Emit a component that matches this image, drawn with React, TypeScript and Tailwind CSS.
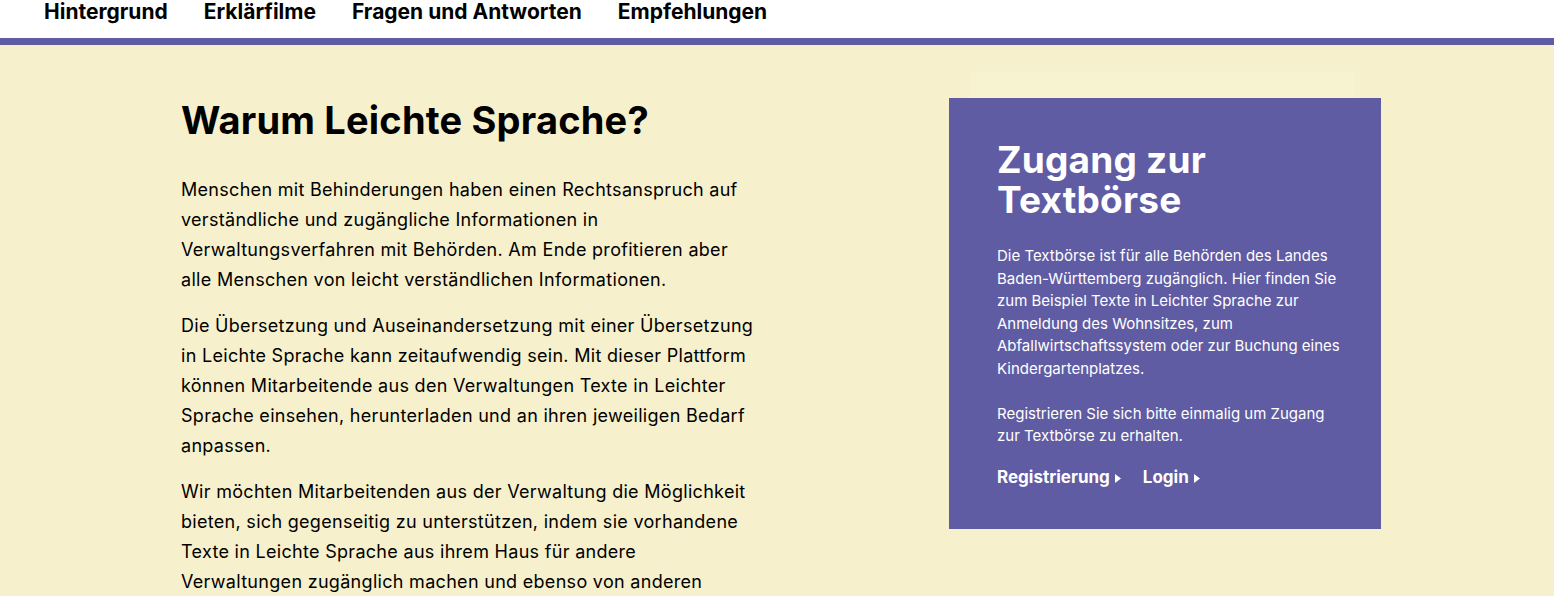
import React from 'react';

const Caret = () => (
  <svg width="6" height="9" viewBox="0 0 6 9" className="ml-[5px] mt-[2px]" aria-hidden>
    <path d="M0 0 L6 4.5 L0 9 Z" fill="white" />
  </svg>
);

export default function App() {
  return (
    <div className="min-h-screen bg-[#f6f0cc] font-['Inter',sans-serif] text-black overflow-hidden">
      <header className="bg-white h-[38px] border-b-[7px] border-[#605ca3] box-content">
        <nav className="flex gap-[36px] pl-[44px] text-[21px] leading-[24px] font-bold">
          <a>Hintergrund</a>
          <a>Erklärfilme</a>
          <a>Fragen und Antworten</a>
          <a>Empfehlungen</a>
        </nav>
      </header>

      <main className="flex pl-[181px] pt-[53px]">
        <section className="w-[580px]">
          <h1 className="text-[38px] leading-[44px] font-bold tracking-[0.2px]">Warum Leichte Sprache?</h1>
          <div className="mt-[33px] text-[18px] leading-[30px] tracking-[0.3px] space-y-[16px] pr-[6px]">
            <p>
              Menschen mit Behinderungen haben einen Rechtsanspruch auf verständliche und zugängliche Informationen in
              Verwaltungsverfahren mit Behörden. Am Ende profitieren aber alle Menschen von leicht verständlichen
              Informationen.
            </p>
            <p>
              Die Übersetzung und Auseinandersetzung mit einer Übersetzung in Leichte Sprache kann zeitaufwendig sein. Mit
              dieser Plattform können Mitarbeitende aus den Verwaltungen Texte in Leichter Sprache einsehen, herunterladen
              und an ihren jeweiligen Bedarf anpassen.
            </p>
            <p>
              Wir möchten Mitarbeitenden aus der Verwaltung die Möglichkeit bieten, sich gegenseitig zu unterstützen, indem
              sie vorhandene Texte in Leichte Sprache aus ihrem Haus für andere Verwaltungen zugänglich machen und ebenso
              von anderen Verwaltungen profitieren.
            </p>
          </div>
        </section>

        <aside className="ml-[188px] w-[432px] relative">
          <div className="absolute left-[22px] right-[26px] -top-[26px] h-[26px] bg-[#f7f2d0]" />
          <div className="bg-[#605ca3] text-white pl-[48px] pr-[40px] pt-[42px] pb-[39px]">
            <h2 className="text-[37px] leading-[40px] font-bold tracking-[0.2px]">Zugang zur Textbörse</h2>
            <div className="mt-[25px] text-[15px] leading-[22.5px]">
              <p>
                Die Textbörse ist für alle Behörden des Landes Baden-Württemberg zugänglich. Hier finden Sie zum Beispiel
                Texte in Leichter Sprache zur Anmeldung des Wohnsitzes, zum Abfallwirtschaftssystem oder zur Buchung eines
                Kindergartenplatzes.
              </p>
              <p className="mt-[22.5px]">
                Registrieren Sie sich bitte einmalig um Zugang zur Textbörse zu erhalten.
              </p>
            </div>
            <div className="mt-[17px] flex gap-[22px] text-[17px] leading-[25px] font-bold">
              <a className="flex items-center">
                Registrierung
                <Caret />
              </a>
              <a className="flex items-center">
                Login
                <Caret />
              </a>
            </div>
          </div>
        </aside>
      </main>
    </div>
  );
}
